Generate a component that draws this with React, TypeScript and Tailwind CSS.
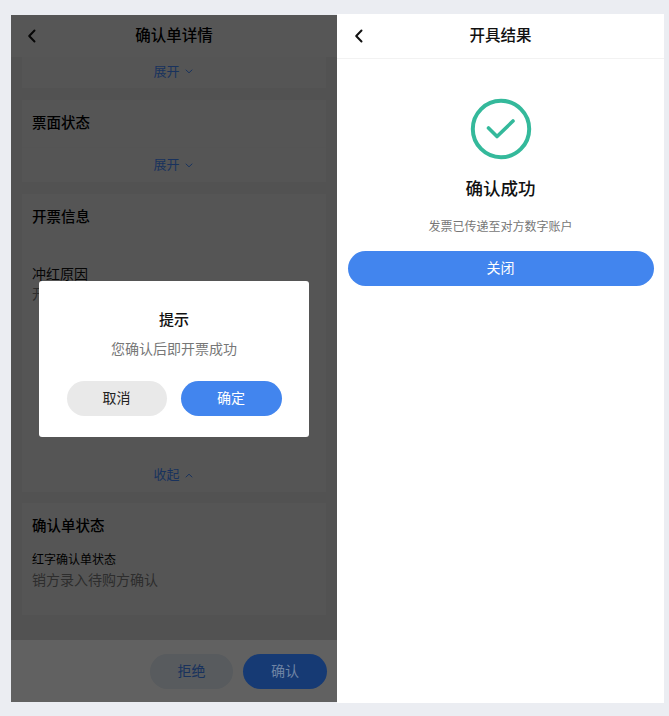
import React from "react";

const font = { fontFamily: '"Noto Sans CJK SC", "Noto Sans", sans-serif' };

function Back({ className }: { className?: string }) {
  return (
    <svg width="10" height="14" viewBox="0 0 10 14" fill="none" className={className}>
      <path d="M7.5 1.5 2.2 7l5.3 5.5" stroke="#111" strokeWidth="2" strokeLinecap="round" strokeLinejoin="round" />
    </svg>
  );
}

function Chevron({ up }: { up?: boolean }) {
  return (
    <svg width="8" height="5" viewBox="0 0 8 5" fill="none" className="ml-[5px] mt-[2px]">
      <path d={up ? "M1 4 4 1.2 7 4" : "M1 1 4 3.8 7 1"} stroke="#4285f4" strokeWidth="1" strokeLinecap="round" strokeLinejoin="round" />
    </svg>
  );
}

function Toggle({ label, up }: { label: string; up?: boolean }) {
  return (
    <div className="-ml-[2px] flex items-center justify-center text-[13px] leading-[20px] text-[#4285f4]">
      {label}
      <Chevron up={up} />
    </div>
  );
}

export default function App() {
  return (
    <div style={font} className="flex h-[716px] w-[669px] bg-[#ebedf2] pl-[11px] pt-[14px]">
      <div className="relative mt-[1px] flex h-[687px] w-[326px] flex-col overflow-hidden bg-[#d8d8d8]">
        <div className="flex h-[42px] shrink-0 items-center bg-[#e3e3e3] pl-[16px]">
          <Back />
          <div className="ml-[-26px] flex-1 pb-[2px] text-center text-[15.5px] font-medium text-[#000]">确认单详情</div>
        </div>

        <div className="flex flex-1 flex-col gap-[12px] px-[11px]">
          <div className="flex h-[31px] items-center justify-center bg-[#e0e0e0] pb-[4px]">
            <Toggle label="展开" />
          </div>

          <div className="h-[82px] bg-[#e0e0e0]">
            <div className="flex h-[48px] items-center border-b border-[#dcdcdc] px-[10px] pb-[3px] text-[14.5px] font-medium text-[#000]">票面状态</div>
            <div className="pt-[6px]"><Toggle label="展开" /></div>
          </div>

          <div className="flex h-[298px] flex-col bg-[#e0e0e0] px-[10px]">
            <div className="pt-[11px] text-[14.5px] font-medium leading-[22px] text-[#000]">开票信息</div>
            <div className="mt-[36px] text-[14px] leading-[20px] text-[#111]">冲红原因</div>
            <div className="text-[14px] leading-[20px] text-[#777]">开票有误</div>
            <div className="mt-auto pb-[8px]"><Toggle label="收起" up /></div>
          </div>

          <div className="-mt-[1px] h-[112px] bg-[#e0e0e0] px-[10px]">
            <div className="pt-[11px] text-[14.5px] font-medium leading-[22px] text-[#000]">确认单状态</div>
            <div className="mt-[15px] text-[12px] leading-[16px] text-[#000]">红字确认单状态</div>
            <div className="mt-[2px] text-[14px] leading-[20px] text-[#777]">销方录入待购方确认</div>
          </div>
        </div>

        <div className="flex h-[62px] shrink-0 items-center justify-end gap-[10px] bg-white pr-[10px]">
          <div className="flex h-[35px] w-[83px] items-center justify-center rounded-full bg-[#e6eef6] pb-[2px] text-[14px] text-[#4285f4]">拒绝</div>
          <div className="relative z-10 flex h-[35px] w-[84px] items-center justify-center rounded-full bg-[#163a74] pb-[2px] text-[14px] text-[#6f84a4]">确认</div>
        </div>

        <div className="absolute inset-0 bg-black/62" />

        <div className="absolute left-[28px] top-[266px] z-20 flex h-[156px] w-[270px] flex-col items-center rounded-[3px] bg-white">
          <div className="mt-[26px] text-[15px] font-medium leading-[24px] text-[#111]">提示</div>
          <div className="mt-[7px] text-[14px] leading-[20px] text-[#777]">您确认后即开票成功</div>
          <div className="mt-[23px] flex gap-[14px]">
            <div className="flex h-[35px] w-[100px] items-center justify-center rounded-full bg-[#e9e9e9] pb-[2px] text-[14px] text-[#222]">取消</div>
            <div className="flex h-[35px] w-[101px] items-center justify-center rounded-full bg-[#4285ee] pb-[2px] text-[14px] text-white">确定</div>
          </div>
        </div>
      </div>

      <div className="flex h-[689px] w-[327px] flex-col bg-white">
        <div className="flex h-[45px] shrink-0 items-center border-b border-[#f2f2f2] pl-[17px]">
          <Back />
          <div className="ml-[-27px] flex-1 pb-[2px] text-center text-[15.5px] font-medium text-[#111]">开具结果</div>
        </div>
        <div className="flex flex-col items-center px-[11px]">
          <svg width="62" height="62" viewBox="0 0 62 62" fill="none" className="mt-[39px]">
            <circle cx="31" cy="31" r="28.2" stroke="#34b99b" strokeWidth="4" />
            <path d="M18.5 30 27 38.5 43 23" stroke="#34b99b" strokeWidth="3.6" strokeLinecap="round" strokeLinejoin="round" />
          </svg>
          <div className="mt-[15px] text-[17.5px] font-medium leading-[26px] text-[#111]">确认成功</div>
          <div className="mt-[16px] text-[12px] leading-[18px] text-[#777]">发票已传递至对方数字账户</div>
          <div className="mt-[16px] flex h-[35px] w-[306px] items-center justify-center rounded-full bg-[#4285ee] pb-[3px] text-[14px] text-white">关闭</div>
        </div>
      </div>
    </div>
  );
}
